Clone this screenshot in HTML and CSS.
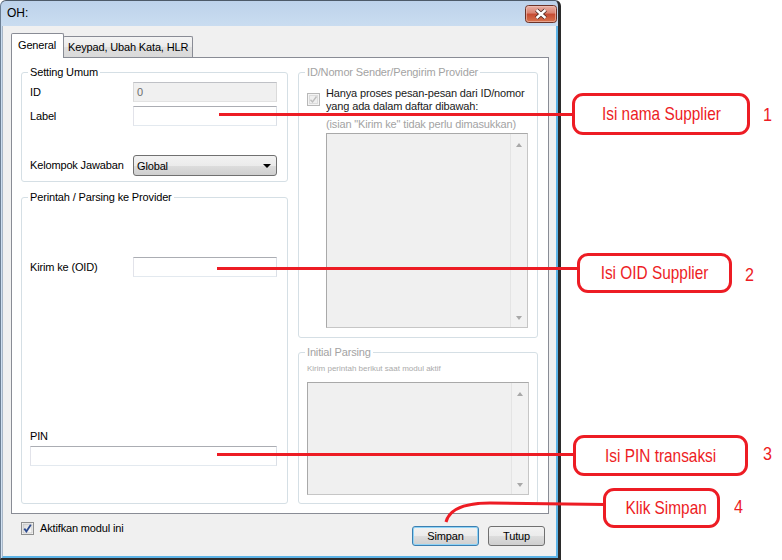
FILE: index.html
```html
<!DOCTYPE html>
<html>
<head>
<meta charset="utf-8">
<link rel="stylesheet" href="styles.css">
</head>
<body>
<div class="window">
  <div class="titlebar">
    <span class="title">OH:</span>
    <div class="close">
      <svg width="32" height="18" viewBox="0 0 32 18">
        <defs>
          <linearGradient id="cg" x1="0" y1="0" x2="0" y2="1">
            <stop offset="0" stop-color="#eab3a7"/>
            <stop offset="0.45" stop-color="#d98270"/>
            <stop offset="0.5" stop-color="#c54a32"/>
            <stop offset="1" stop-color="#d9774f"/>
          </linearGradient>
        </defs>
        <rect x="0.5" y="0.5" width="31" height="17" rx="3" fill="url(#cg)" stroke="#6b3328"/>
        <rect x="1.5" y="1.5" width="29" height="15" rx="2" fill="none" stroke="#f1c7bd" stroke-opacity="0.6"/>
        <path d="M11.5 5 L20.5 13 M20.5 5 L11.5 13" stroke="#4a2620" stroke-width="4.2"/>
        <path d="M11.5 5 L20.5 13 M20.5 5 L11.5 13" stroke="#ffffff" stroke-width="2.4"/>
      </svg>
    </div>
  </div>
  <div class="client">
    <div class="tabs">
      <div class="tab active">General</div>
      <div class="tab">Keypad, Ubah Kata, HLR</div>
    </div>
    <div class="panel">
      <div class="col col-left">
        <div class="group g-setting">
          <span class="legend">Setting Umum</span>
          <div class="row r-id"><span class="lbl">ID</span><div class="field disabled">0</div></div>
          <div class="row r-label"><span class="lbl">Label</span><div class="field"></div></div>
          <div class="row r-combo"><span class="lbl">Kelompok Jawaban</span><div class="combo"><span>Global</span><span class="caret"></span></div></div>
        </div>
        <div class="group g-perintah">
          <span class="legend">Perintah / Parsing ke Provider</span>
          <div class="row r-kirim"><span class="lbl">Kirim ke (OID)</span><div class="field"></div></div>
          <div class="pin-label">PIN</div>
          <div class="field wide"></div>
        </div>
      </div>
      <div class="col col-right">
        <div class="group g-sender">
          <span class="legend dim">ID/Nomor Sender/Pengirim Provider</span>
          <div class="check-row">
            <span class="cb">
              <svg width="13" height="13" viewBox="0 0 13 13">
                <rect x="0.5" y="0.5" width="12" height="12" fill="#f4f4f4" stroke="#b8b8b8"/>
                <rect x="2.5" y="2.5" width="8" height="8" fill="#efefef" stroke="#dcdcdc"/>
                <path d="M3.5 6.8 L5.5 9 L9.5 3.5" fill="none" stroke="#bdbdbd" stroke-width="1.4"/>
              </svg>
            </span>
            <span class="check-text">Hanya proses pesan-pesan dari ID/nomor<br>yang ada dalam daftar dibawah:</span>
          </div>
          <div class="hint">(isian "Kirim ke" tidak perlu dimasukkan)</div>
          <div class="listbox lb1"><div class="sb"><span class="up"></span><span class="down"></span></div></div>
        </div>
        <div class="group g-initial">
          <span class="legend dim">Initial Parsing</span>
          <div class="small">Kirim perintah berikut saat modul aktif</div>
          <div class="listbox lb2"><div class="sb"><span class="up"></span><span class="down"></span></div></div>
        </div>
      </div>
    </div>
    <div class="bottombar">
      <label class="aktif">
        <span class="cb">
          <svg width="13" height="13" viewBox="0 0 13 13">
            <defs>
              <linearGradient id="cbg" x1="0" y1="0" x2="1" y2="1">
                <stop offset="0" stop-color="#d6d6d6"/>
                <stop offset="1" stop-color="#ffffff"/>
              </linearGradient>
            </defs>
            <rect x="0.5" y="0.5" width="12" height="12" fill="#ffffff" stroke="#8e8f8f"/>
            <rect x="2" y="2" width="9" height="9" fill="url(#cbg)" stroke="#bcbcbc" stroke-width="0.8"/>
            <path d="M3.3 6.6 L5.4 9.4 L9.8 2.8" fill="none" stroke="#2c4a8e" stroke-width="1.8"/>
          </svg>
        </span>
        <span>Aktifkan modul ini</span>
      </label>
      <div class="buttons">
        <button class="btn btn-default">Simpan</button>
        <button class="btn btn-tutup">Tutup</button>
      </div>
    </div>
  </div>
</div>

<div class="annot">
  <svg class="lines" width="782" height="560" viewBox="0 0 782 560">
    <path d="M219 114.5 H574" />
    <path d="M217 268.5 H579" />
    <path d="M217 454.5 H575" />
    <path d="M446 522 Q451 503 490 503 L605 504.5" />
  </svg>
  <div class="callout c1"><span>Isi nama Supplier</span></div>
  <div class="callout c2"><span>Isi OID Supplier</span></div>
  <div class="callout c3"><span>Isi PIN transaksi</span></div>
  <div class="callout c4"><span>Klik Simpan</span></div>
  <span class="num n1">1</span>
  <span class="num n2">2</span>
  <span class="num n3">3</span>
  <span class="num n4">4</span>
</div>
</body>
</html>
```

FILE: styles.css
```css
body {
  margin: 0;
  width: 782px;
  height: 560px;
  position: relative;
  overflow: hidden;
  background: #ffffff;
  font-family: "Liberation Sans", Arial, sans-serif;
  font-size: 11px;
  color: #000;
}

.window {
  width: 561px;
  height: 560px;
  box-sizing: border-box;
  border: 1px solid #6c7f94;
  border-top-color: #4d5a68;
  border-right: 3px solid #2b2b2b;
  border-bottom: 2px solid #2b2b2b;
  border-radius: 6px 6px 0 0;
  background: linear-gradient(#bdd2ea, #c9dcf0 24px, #d1e1f2);
  display: flex;
  flex-direction: column;
  letter-spacing: -0.15px;
}

.titlebar {
  height: 25px;
  flex: none;
  display: flex;
  align-items: flex-start;
  justify-content: space-between;
  padding: 0 1px 0 6px;
}

.title {
  font-size: 12px;
  line-height: 25px;
  color: #000;
  letter-spacing: 0;
}

.close {
  margin-top: 4px;
  height: 18px;
}

.close svg { display: block; }

.client {
  flex: 1;
  margin-left: 1px;
  background: #f0f0f0;
  border-left: 1px solid #a9b7c7;
  border-right: 2px solid #5db3e6;
  border-bottom: 2px solid #5db3e6;
  display: flex;
  flex-direction: column;
}

.tabs {
  height: 24px;
  flex: none;
  margin-top: 7px;
  padding-left: 8px;
  display: flex;
  align-items: flex-end;
  position: relative;
  z-index: 2;
}

.tab {
  box-sizing: border-box;
  border: 1px solid #898c95;
  border-bottom: none;
  white-space: nowrap;
  line-height: 13px;
}

.tab.active {
  width: 53px;
  height: 25px;
  margin-bottom: -1px;
  background: #ffffff;
  padding: 5px 0 0 6px;
  border-radius: 2px 2px 0 0;
  position: relative;
  z-index: 3;
}

.tab:not(.active) {
  width: 130px;
  height: 21px;
  margin-left: -1px;
  padding: 4px 0 0 4px;
  background: linear-gradient(#f4f4f4, #ebebeb 50%, #dfdfdf 50%, #d9d9d9);
  border-radius: 2px 2px 0 0;
}

.panel {
  margin-left: 8px;
  width: 538px;
  height: 457px;
  box-sizing: border-box;
  border: 1px solid #898c95;
  background: #ffffff;
  display: flex;
  gap: 10px;
  padding: 14px 10px 9px 9px;
  position: relative;
  z-index: 1;
}

.col {
  display: flex;
  flex-direction: column;
}

.col-left { width: 267px; }
.col-right { width: 240px; }

.group {
  box-sizing: border-box;
  border: 1px solid #d5dfe5;
  border-radius: 3px;
  padding: 0 9px 0 8px;
  display: flex;
  flex-direction: column;
  align-items: flex-start;
}

.legend {
  margin: -7px 0 0 -2px;
  padding: 0 2px;
  background: #ffffff;
  line-height: 13px;
  white-space: nowrap;
}

.legend.dim { color: #a3a3a3; }

.g-setting { height: 110px; }
.g-perintah { flex: 1; margin-top: 15px; }
.g-sender { height: 266px; }
.g-initial { flex: 1; margin-top: 14px; }

.row {
  display: flex;
  align-items: center;
  height: 20px;
}

.lbl {
  width: 103px;
  line-height: 13px;
  white-space: nowrap;
}

.r-id { margin-top: 3px; }
.r-label { margin-top: 4px; }
.r-combo { margin-top: 29px; height: 21px; }
.r-kirim { margin-top: 53px; }

.field {
  width: 144px;
  height: 20px;
  box-sizing: border-box;
  border: 1px solid;
  border-color: #abadb3 #dbdfe6 #e3e9ef #e2e3ea;
  background: #ffffff;
  padding-left: 3px;
  line-height: 18px;
}

.field.disabled {
  background: #f0f0f0;
  border-color: #bfc1c6 #dadada #e2e2e2 #dadada;
  color: #6d6d6d;
}

.field.wide {
  width: 247px;
  margin-top: 3px;
}

.pin-label {
  margin-top: 153px;
  line-height: 13px;
}

.combo {
  width: 144px;
  height: 21px;
  box-sizing: border-box;
  border: 1px solid #707070;
  border-radius: 3px;
  background: linear-gradient(#f2f2f2, #ebebeb 50%, #dddddd 50%, #cfcfcf);
  display: flex;
  align-items: center;
  justify-content: space-between;
  padding: 0 5px 0 3px;
}

.caret {
  width: 0;
  height: 0;
  border-left: 4px solid transparent;
  border-right: 4px solid transparent;
  border-top: 4px solid #000;
  margin-top: 1px;
}

.check-row {
  margin-top: 8px;
  display: flex;
  align-items: flex-start;
  gap: 6px;
}

.cb {
  display: block;
  width: 13px;
  height: 13px;
  flex: none;
}

.cb svg { display: block; }

.check-row .cb { margin-top: 6px; }

.check-text {
  line-height: 13px;
  color: #1a1a1a;
  white-space: nowrap;
}

.hint {
  margin: 5px 0 0 19px;
  line-height: 13px;
  color: #a3a3a3;
  white-space: nowrap;
}

.small {
  margin-top: 4px;
  font-size: 8px;
  line-height: 11px;
  color: #ababab;
  white-space: nowrap;
  letter-spacing: 0;
}

.listbox {
  box-sizing: border-box;
  border: 1px solid #a9a9a9;
  border-right-color: #c6c6c6;
  border-bottom-color: #c6c6c6;
  background: #f0f0f0;
  display: flex;
  justify-content: flex-end;
}

.lb1 {
  margin: 2px 0 0 19px;
  width: 202px;
  height: 195px;
}

.lb2 {
  margin-top: 8px;
  width: 222px;
  height: 113px;
}

.sb {
  width: 17px;
  box-sizing: border-box;
  border-left: 1px solid #e4e4e4;
  background: #f2f2f2;
  display: flex;
  flex-direction: column;
  justify-content: space-between;
  align-items: center;
  padding: 9px 0 7px;
}

.up, .down {
  width: 0;
  height: 0;
  border-left: 3.5px solid transparent;
  border-right: 3.5px solid transparent;
}

.up { border-bottom: 4px solid #a8a8a8; }
.down { border-top: 4px solid #a8a8a8; }

.bottombar {
  flex: 1;
  display: flex;
  justify-content: space-between;
  align-items: flex-start;
  padding: 0 11px 0 18px;
}

.aktif {
  margin-top: 8px;
  display: flex;
  align-items: center;
  gap: 6px;
  line-height: 13px;
}

.buttons {
  margin-top: 12px;
  display: flex;
  gap: 9px;
}

.btn {
  height: 20px;
  box-sizing: border-box;
  border: 1px solid #707070;
  border-radius: 3px;
  background: linear-gradient(#f2f2f2, #ebebeb 50%, #dddddd 50%, #cfcfcf);
  font-family: "Liberation Sans", Arial, sans-serif;
  font-size: 11px;
  letter-spacing: -0.15px;
  color: #000;
  padding: 0;
  line-height: 18px;
}

.btn-default {
  width: 67px;
  border-color: #3c7fb1;
  box-shadow: inset 0 0 0 1px #8fd3f6;
}

.btn-tutup { width: 57px; }

.annot {
  position: absolute;
  left: 0;
  top: 0;
  z-index: 10;
  width: 782px;
  height: 560px;
  pointer-events: none;
}

.lines {
  position: absolute;
  left: 0;
  top: 0;
}

.lines path {
  fill: none;
  stroke: #ed1c24;
  stroke-width: 3;
}

.callout {
  position: absolute;
  box-sizing: border-box;
  border: 3px solid #ed1c24;
  border-radius: 11px;
  background: #ffffff;
  display: flex;
  align-items: center;
  justify-content: center;
  color: #ed1c24;
  font-size: 19px;
}

.callout span {
  display: inline-block;
  white-space: nowrap;
  transform: scaleX(0.81);
}

.c1 { left: 572px; top: 93px; width: 178px; height: 42px; }
.c2 { left: 577px; top: 253px; width: 155px; height: 40px; }
.c3 { left: 573px; top: 435px; width: 175px; height: 41px; }
.c4 { left: 603px; top: 488px; width: 117px; height: 40px; padding-left: 10px; }

.num {
  position: absolute;
  color: #ed1c24;
  font-size: 19px;
  line-height: 19px;
  transform: scaleX(0.85);
  transform-origin: left top;
}

.n1 { left: 763px; top: 105px; }
.n2 { left: 745px; top: 265px; }
.n3 { left: 763px; top: 444px; }
.n4 { left: 734px; top: 497px; }
```
